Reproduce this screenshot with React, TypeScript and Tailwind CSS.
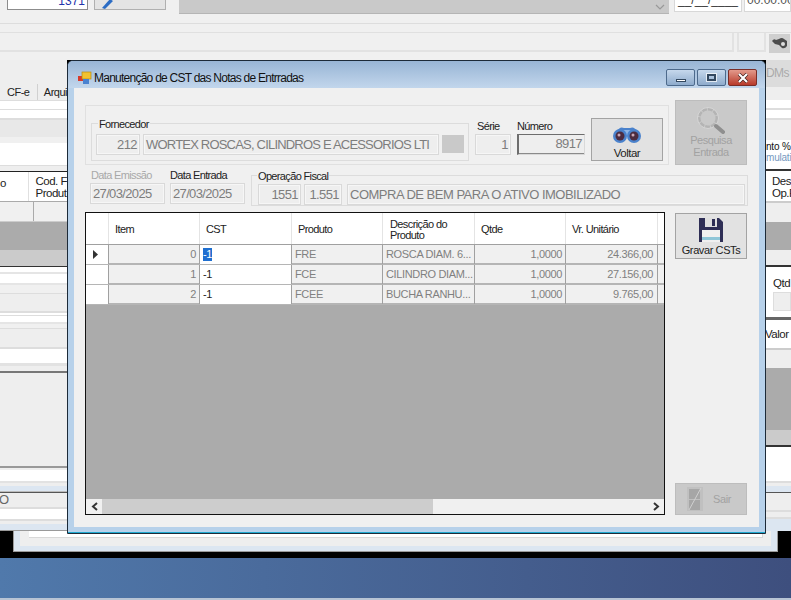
import React from "react";

type Stripe = [number, string, React.ReactNode?];

const leftStripes: Stripe[] = [
  [24, "bg-[#eeeeee]"],
  [16, "bg-[#eeeeee]", (
    <div className="flex h-full text-[11px] tracking-[-0.5px] leading-[16px] text-[#222] whitespace-nowrap">
      <div className="w-[39px] pl-[7px] border-r border-[#d0d0d0]">CF-e</div>
      <div className="pl-[6px]">Arqui</div>
    </div>
  )],
  [1, "bg-[#dddddd]"],
  [8, "bg-white"],
  [1, "bg-[#dddddd]"],
  [8, "bg-white"],
  [2, "bg-[#dddddd]"],
  [17, "bg-[#e8e8e8]"],
  [6, "bg-[#f0f0f0]"],
  [22, "bg-white"],
  [1, "bg-[#dddddd]"],
  [5, "bg-[#eeeeee]"],
  [1, "bg-[#222222]"],
  [29, "bg-white", (
    <div className="flex h-full text-[11.5px] tracking-[-0.5px] text-[#222] whitespace-nowrap">
      <div className="w-[33px] pt-[3px] border-r border-[#e0e0e0]">o</div>
      <div className="pl-[6px] pt-[3px]">
        <div className="leading-[12px]">Cod. F</div>
        <div className="leading-[12px]">Produt</div>
      </div>
    </div>
  )],
  [1, "bg-[#aaaaaa]"],
  [19, "bg-[#f0f0f0]", <div className="w-[34px] h-full border-r border-[#aaaaaa]" />],
  [1, "bg-[#cccccc]"],
  [28, "bg-[#ababab]"],
  [16, "bg-[#cbcbcb]"],
  [1, "bg-[#333333]"],
  [5, "bg-white"],
  [2, "bg-[#e5e5e5]"],
  [9, "bg-white"],
  [2, "bg-[#e5e5e5]"],
  [8, "bg-[#f0f0f0]"],
  [1, "bg-[#dddddd]"],
  [17, "bg-[#eeeeee]"],
  [2, "bg-[#dddddd]"],
  [2, "bg-white"],
  [1, "bg-[#dddddd]"],
  [6, "bg-white"],
  [2, "bg-[#e5e5e5]"],
  [4, "bg-[#f0f0f0]"],
  [1, "bg-[#dddddd]"],
  [18, "bg-[#eeeeee]"],
  [2, "bg-[#dddddd]"],
  [14, "bg-white"],
  [3, "bg-[#e2e2e2]"],
  [5, "bg-[#eeeeee]"],
  [2, "bg-[#777777]"],
  [93, "bg-[#eeeeee]"],
  [2, "bg-[#999999]"],
  [2, "bg-[#eeeeee]"],
  [11, "bg-white"],
  [2, "bg-[#e2e2e2]"],
  [3, "bg-[#eeeeee]"],
  [5, "bg-[#dce6f1]"],
  [1, "bg-[#bbbbbb]"],
  [1, "bg-[#555555]"],
  [14, "bg-[#eeeeee]", <div className="text-[13px] leading-[14px] text-[#666] -ml-[1px]">O</div>],
  [2, "bg-[#dddddd]"],
  [10, "bg-white"],
  [2, "bg-[#dddddd]"],
  [3, "bg-[#eeeeee]"],
  [6, "bg-[#dce6f1]"],
  [1, "bg-[#999999]"],
];

const rightStripes: Stripe[] = [
  [27, "bg-[#dcdcdc]", <div className="text-[12px] tracking-[-0.6px] leading-[26px] text-[#aaa] whitespace-nowrap">DMs</div>],
  [13, "bg-[#eeeeee]"],
  [8, "bg-white"],
  [2, "bg-[#dddddd]"],
  [8, "bg-white"],
  [2, "bg-[#dddddd]"],
  [20, "bg-[#eeeeee]"],
  [29, "bg-white", (
    <div className="pt-[1px] text-[10px] tracking-[-0.2px] whitespace-nowrap">
      <div className="leading-[11px] text-[#111]">nto %</div>
      <div className="leading-[11px] text-[#3a6ea5] opacity-70">mulati</div>
    </div>
  )],
  [2, "bg-[#333333]"],
  [30, "bg-white", (
    <div className="pl-[6px] pt-[4px] text-[11.5px] tracking-[-0.5px] text-[#222] whitespace-nowrap">
      <div className="leading-[12px]">Desc</div>
      <div className="leading-[12px]">Op.F</div>
    </div>
  )],
  [2, "bg-[#cccccc]"],
  [19, "bg-[#eeeeee]"],
  [28, "bg-[#ababab]"],
  [15, "bg-[#eeeeee]"],
  [2, "bg-[#333333]"],
  [50, "bg-white", (
    <div className="pl-[7px] pt-[9px] text-[11.5px] tracking-[-0.5px] leading-[14px] text-[#222]">
      Qtd
      <div className="mt-[2px] h-[19px] bg-[#eeeeee] border border-[#dddddd]" />
    </div>
  )],
  [3, "bg-[#666666]"],
  [28, "bg-white", <div className="text-[11.5px] tracking-[-0.5px] leading-[28px] -ml-[1px] text-[#222]">Valor</div>],
  [2, "bg-[#cccccc]"],
  [18, "bg-[#eeeeee]"],
  [62, "bg-[#ababab]"],
  [15, "bg-[#cbcbcb]"],
  [2, "bg-[#333333]"],
  [34, "bg-white"],
  [2, "bg-[#dddddd]"],
  [3, "bg-[#eeeeee]"],
  [6, "bg-[#dce6f1]"],
  [1, "bg-[#555555]"],
  [17, "bg-[#eeeeee]"],
  [2, "bg-[#dddddd]"],
  [5, "bg-[#eeeeee]"],
  [2, "bg-[#dddddd]"],
  [12, "bg-[#dce6f1]"],
];

const Stripes = ({ items, className }: { items: Stripe[]; className: string }) => (
  <div className={`${className} overflow-hidden`}>
    {items.map(([h, c, content], i) => (
      <div key={i} className={`${c} overflow-hidden`} style={{ height: h }}>
        {content}
      </div>
    ))}
  </div>
);

const Field = ({
  className,
  children,
  right,
}: {
  className: string;
  children?: React.ReactNode;
  right?: boolean;
}) => (
  <div
    className={`${className} h-[21px] shrink-0 bg-[#eeeeee] border border-[#d9d9d9] shadow-[inset_0_0_0_1px_#f6f6f6] text-[#7d7d7d] text-[13px] leading-[19px] px-[2px] overflow-hidden whitespace-nowrap ${
      right ? "text-right" : ""
    }`}
  >
    {children}
  </div>
);

const Label = ({ children, disabled }: { children: React.ReactNode; disabled?: boolean }) => (
  <div className={`text-[11px] tracking-[-0.65px] leading-[14px] whitespace-nowrap ${disabled ? "text-[#a8a8a8]" : "text-[#222]"}`}>
    {children}
  </div>
);

const Legend = ({ children, className }: { children: React.ReactNode; className: string }) => (
  <div className={`absolute -top-[7px] ${className} bg-[#f0f0f0] text-[11px] tracking-[-0.65px] leading-[14px] text-[#222] whitespace-nowrap`}>
    {children}
  </div>
);

const Binoculars = () => (
  <svg width="30" height="20" viewBox="0 0 30 20">
    <path d="M5 6 Q8 1 12 3 L18 3 Q22 1 25 6 L19 9 L11 9 Z" fill="#4a82cc" />
    <rect x="11" y="5" width="8" height="6" fill="#8fb6e6" />
    <circle cx="8" cy="11" r="7" fill="#4a82cc" />
    <circle cx="22" cy="11" r="7" fill="#4a82cc" />
    <circle cx="8" cy="11" r="4.5" fill="#4c2c40" />
    <circle cx="22" cy="11" r="4.5" fill="#4c2c40" />
    <circle cx="7" cy="10" r="1.5" fill="#c9a8b8" />
    <circle cx="21" cy="10" r="1.5" fill="#c9a8b8" />
  </svg>
);

const Magnifier = () => (
  <svg width="28" height="27" viewBox="0 0 28 27">
    <circle cx="11" cy="11" r="9" fill="none" stroke="#b4b4b4" strokeWidth="3" strokeDasharray="5 1" />
    <circle cx="11" cy="11" r="10.5" fill="none" stroke="#d6d6d6" strokeWidth="1" />
    <path d="M19 19 L26 25" stroke="#8f8f8f" strokeWidth="4" strokeLinecap="round" />
  </svg>
);

const Floppy = () => (
  <svg width="24" height="24" viewBox="0 0 24 24">
    <path d="M0 0 H20 L24 4 V24 H0 Z" fill="#2e2e55" />
    <rect x="6" y="0" width="12" height="9" fill="#dfdfdf" />
    <rect x="13" y="1" width="3" height="7" fill="#2e2e55" />
    <rect x="3" y="12" width="18" height="12" fill="#f0f0f0" />
    <rect x="3" y="19" width="18" height="3" fill="#8fc6d8" />
  </svg>
);

const Door = () => (
  <svg width="16" height="24" viewBox="0 0 16 24">
    <rect x="0" y="0" width="16" height="24" fill="#c0c0c0" />
    <rect x="2" y="2" width="11" height="10" fill="#a6a6a6" />
    <rect x="2" y="13" width="11" height="10" fill="#a6a6a6" />
    <path d="M2 23 L14 1" stroke="#d0d0d0" strokeWidth="1" />
  </svg>
);

const AppIcon = () => (
  <svg width="14" height="14" viewBox="0 0 14 14" className="shrink-0">
    <rect x="0" y="5" width="5" height="5" fill="#d83a2a" />
    <rect x="4" y="1" width="9" height="7" fill="#f2c230" stroke="#b88a10" strokeWidth="0.7" />
    <rect x="5" y="8" width="6" height="5" fill="#4a82d0" />
  </svg>
);

const rows = [
  ["0", "-1", "FRE", "ROSCA DIAM. 6...", "1,0000", "24.366,00"],
  ["1", "-1", "FCE", "CILINDRO DIAM...", "1,0000", "27.156,00"],
  ["2", "-1", "FCEE", "BUCHA RANHU...", "1,0000", "9.765,00"],
];

const COLS = "grid grid-cols-[23px_91px_92px_91px_92px_91px_92px_6px]";

export default function App() {
  return (
    <div
      className="relative w-[791px] h-[600px] overflow-hidden bg-black flex flex-col"
      style={{ fontFamily: '"Liberation Sans", Arial, sans-serif' }}
    >
      {/* Top of the application behind the dialog */}
      <div className="h-[60px] shrink-0 bg-[#f0f0f0] overflow-hidden">
        <div className="h-[15px] flex items-start overflow-hidden">
          <div className="ml-[7px] mt-[-10px] w-[81px] h-[20px] bg-white border border-[#8c8c8c] text-right pr-[2px] text-[12px] leading-[20px] text-[#2233aa]">
            1371
          </div>
          <div className="ml-[6px] mt-[-10px] w-[72px] h-[20px] bg-[#e4e4e4] border border-[#b0b0b0] pl-[6px]">
            <svg width="12" height="18" viewBox="0 0 12 18">
              <path d="M1 17 L9 8 L12 10 L4 18 Z" fill="#2b6cc4" />
            </svg>
          </div>
          <div className="ml-[13px] w-[490px] h-[14px] bg-[#c9c9c9] border-b border-[#b5b5b5] flex justify-end items-center pr-[4px]">
            <svg width="10" height="6" viewBox="0 0 10 6">
              <path d="M1 1 L5 5 L9 1" fill="none" stroke="#999" strokeWidth="1.2" />
            </svg>
          </div>
          <div className="ml-[5px] mt-[-8px] w-[68px] h-[20px] bg-white border border-[#d8d8d8] text-[12px] leading-[14px] text-[#333] text-center overflow-hidden">
            __/__/____
          </div>
          <div className="ml-[2px] mt-[-8px] flex-1 h-[20px] bg-white border border-[#d8d8d8] text-[12px] leading-[14px] text-[#555] pl-[2px] overflow-hidden whitespace-nowrap">
            00:00:00
          </div>
        </div>
        <div className="h-[9px] border-b border-[#dddddd]" />
        <div className="h-[9px] border-b border-[#e0e0e0]" />
        <div className="h-[19px] flex">
          <div className="w-[734px] bg-[#f0f0f0] border-r-2 border-b-2 border-[#e2e2e2]" />
          <div className="ml-[3px] w-[29px] border-2 border-t-0 border-[#e2e2e2]" />
          <div className="ml-[3px] mt-[1px] w-[21px] h-[19px] bg-[#cfcfcf] flex items-center justify-center">
            <svg width="17" height="13" viewBox="0 0 17 13">
              <path d="M1 4 Q3 1 5 3 L8 2 Q11 0 13 2 L16 4 V9 Q14 12 11 11 L8 8 L4 7 Z" fill="#4b4b4b" />
              <circle cx="12" cy="7" r="2" fill="#dddddd" />
            </svg>
          </div>
        </div>
      </div>

      {/* Middle of the application: only the strips beside the dialog are seen */}
      <div className="h-[471px] shrink-0 flex justify-between">
        <Stripes items={leftStripes} className="w-[67px]" />
        <Stripes items={rightStripes} className="w-[25px]" />
      </div>

      {/* Bottom of the second window */}
      <div className="h-[21px] shrink-0 flex px-[13px]">
        <div className="flex-1 border-l border-b border-r border-[#9a9a9a] bg-[#dce6f1] pl-[6px] pr-[6px] pb-[5px]">
          <div className="h-full bg-[#eeeeee] pl-[9px] pr-[8px] pb-[8px]">
            <div className="h-full bg-white border-r border-b border-[#d8d8d8]" />
          </div>
        </div>
      </div>

      {/* Desktop */}
      <div className="mt-[6px] h-[40px] shrink-0 bg-[linear-gradient(90deg,#5079ab,#3e4f7e)]" />
      <div className="flex-1 bg-[#b8c4d4]" />

      {/* Dialog */}
      <div className="absolute left-[67px] top-[60px] w-[699px] h-[474px] rounded-t-[6px] border border-[#1c2a38] bg-[#b7d1ea] flex flex-col">
        <div className="h-[27px] shrink-0 rounded-t-[5px] bg-[linear-gradient(180deg,#98b5d5,#c2d6ec)] flex justify-between pl-[10px] pr-[8px]">
          <div className="flex items-center gap-[2px] pt-[7px]">
            <AppIcon />
            <span className="text-[12px] tracking-[-0.75px] text-[#111] whitespace-nowrap">Manutenção de CST das Notas de Entrradas</span>
          </div>
          <div className="flex gap-[2px] pt-[8px]">
            <div className="w-[29px] h-[17px] rounded-[2px] border border-[#4d6a8c] bg-[linear-gradient(180deg,#c6d8ec,#8eabcc)] flex items-end justify-center pb-[3px]">
              <div className="w-[10px] h-[3px] bg-white border border-[#33485f]" />
            </div>
            <div className="w-[29px] h-[17px] rounded-[2px] border border-[#4d6a8c] bg-[linear-gradient(180deg,#c6d8ec,#8eabcc)] flex items-center justify-center">
              <div className="w-[9px] h-[7px] border-2 border-[#33485f] outline outline-1 outline-white/70" />
            </div>
            <div className="w-[29px] h-[17px] rounded-[2px] border border-[#7a2e28] bg-[linear-gradient(180deg,#e39a8c,#b83a2a)] flex items-center justify-center">
              <svg width="12" height="10" viewBox="0 0 12 10">
                <path d="M2 1 L10 9 M10 1 L2 9" stroke="#3a1a18" strokeWidth="3.4" />
                <path d="M2 1 L10 9 M10 1 L2 9" stroke="#fff" strokeWidth="2.2" />
              </svg>
            </div>
          </div>
        </div>

        <div className="ml-[6px] w-[685px] h-[439px] shrink-0 bg-[#f0f0f0] pl-[11px] pt-[12px]">
          {/* First row */}
          <div className="flex items-end">
            <div className="w-[584px] h-[60px] border border-[#e0e0e0] pl-[5px] pb-[3px] flex items-end">
              <div className="relative w-[378px] h-[38px] border border-[#dcdcdc] pl-[4px] pt-[10px] flex gap-[3px]">
                <Legend className="left-[6px] px-[1px]">Fornecedor</Legend>
                <Field className="w-[44px] tracking-[-0.6px]" right>212</Field>
                <Field className="w-[296px] tracking-[-0.8px]">WORTEX ROSCAS, CILINDROS E ACESSORIOS LTI</Field>
                <div className="w-[22px] h-[18px] mt-[1px] bg-[#c9c9c9]" />
              </div>
              <div className="ml-[6px] w-[36px] mb-[6px]">
                <div className="pl-[2px] mb-[1px]"><Label>Série</Label></div>
                <Field className="w-[36px] tracking-[-0.6px]" right>1</Field>
              </div>
              <div className="ml-[6px] w-[68px] mb-[6px]">
                <div className="mb-[1px]"><Label>Número</Label></div>
                <div className="h-[21px] bg-[#eeeeee] border border-[#d9d9d9] border-l-[#6d6d6d] border-t-[#6d6d6d] border-l-2 shadow-[inset_0_-1px_0_#8a8a8a] text-[#7d7d7d] text-[13px] tracking-[-0.6px] leading-[18px] text-right pr-[2px]">
                  8917
                </div>
              </div>
              <div className="ml-[6px] w-[72px] h-[43px] bg-[#e2e2e2] border border-[#a3a3a3] flex flex-col items-center pt-[6px]">
                <Binoculars />
                <div className="text-[11.5px] tracking-[-0.5px] leading-[13px] text-[#222] mt-[2px]">Voltar</div>
              </div>
            </div>
            <div className="ml-[6px] w-[72px] h-[65px] bg-[#c9c9c9] border border-[#bdbdbd] flex flex-col items-center pt-[6px]">
              <Magnifier />
              <div className="text-[11px] tracking-[-0.45px] leading-[12px] text-[#a2a2a2] text-center">
                Pesquisa<br />Entrada
              </div>
            </div>
          </div>

          {/* Second row */}
          <div className="mt-[5px] h-[36px] pl-[5px] flex items-end">
            <div className="w-[75px] mb-[2px]">
              <div className="pl-[1px] mb-[1px]"><Label disabled>Data Emissão</Label></div>
              <Field className="w-[75px] tracking-[-0.65px]">27/03/2025</Field>
            </div>
            <div className="ml-[5px] w-[75px] mb-[2px]">
              <div className="mb-[1px]"><Label>Data Entrada</Label></div>
              <Field className="w-[75px] tracking-[-0.65px]">27/03/2025</Field>
            </div>
            <div className="relative ml-[6px] w-[497px] h-[31px] border border-[#dcdcdc] pl-[6px] pt-[8px] flex">
              <Legend className="left-[5px] px-[1px]">Operação Fiscal</Legend>
              <Field className="w-[43px] tracking-[-0.6px]" right>1551</Field>
              <Field className="w-[38px] ml-[3px] tracking-[-0.6px]" right>1.551</Field>
              <Field className="w-[398px] ml-[5px] tracking-[-0.5px]">COMPRA DE BEM PARA O ATIVO IMOBILIZADO</Field>
            </div>
          </div>

          {/* Grid and side buttons */}
          <div className="mt-[6px] flex">
            <div className="w-[580px] h-[303px] border border-[#111] bg-[#ababab] flex flex-col">
              <div className={`${COLS} h-[32px] pb-0 bg-white border-b border-[#a0a0a0] text-[11px] tracking-[-0.6px] text-[#222]`}>
                <div className="border-r border-[#e4e4e4]" />
                {["Item", "CST", "Produto", "", "Qtde", "Vr. Unitário"].map((t, i) =>
                  t ? (
                    <div key={t} className="border-r border-[#e4e4e4] pl-[6px] pt-[2px] flex items-center">{t}</div>
                  ) : (
                    <div key={i} className="border-r border-[#e4e4e4] pl-[7px] pt-[2px] flex flex-col justify-center">
                      <div className="leading-[11px]">Descrição do</div>
                      <div className="leading-[11px]">Produto</div>
                    </div>
                  )
                )}
                <div />
              </div>
              {rows.map((r, i) => (
                <div key={r[0]} className={`${COLS} h-[20px] bg-[#f0f0f0] border-b-2 border-[#b5b5b5] text-[11px] tracking-[-0.35px] leading-[19px] text-[#808080]`}>
                  <div className="bg-white border-r border-[#a0a0a0] flex items-center pl-[7px]">
                    {i === 0 && (
                      <svg width="5" height="9" viewBox="0 0 5 9">
                        <path d="M0 0 L5 4.5 L0 9 Z" fill="#333" />
                      </svg>
                    )}
                  </div>
                  <div className="border-r border-[#a0a0a0] text-right pr-[3px]">{r[0]}</div>
                  <div className="bg-white border-r border-[#a0a0a0] pl-[3px] text-[#222]">
                    {i === 0 ? <span className="bg-[#1f6fd0] text-white inline-block leading-[13px]">{r[1]}</span> : r[1]}
                  </div>
                  <div className="border-r border-[#a0a0a0] pl-[3px]">{r[2]}</div>
                  <div className="border-r border-[#a0a0a0] pl-[3px] whitespace-nowrap overflow-hidden">{r[3]}</div>
                  <div className="border-r border-[#a0a0a0] text-right pr-[3px]">{r[4]}</div>
                  <div className="border-r border-[#a0a0a0] text-right pr-[4px]">{r[5]}</div>
                  <div />
                </div>
              ))}
              <div className="flex-1" />
              <div className="h-[15px] bg-[#f0f0f0] flex items-center">
                <div className="w-[16px] flex justify-center">
                  <svg width="7" height="9" viewBox="0 0 7 9">
                    <path d="M6 1 L2 4.5 L6 8" fill="none" stroke="#333" strokeWidth="2" />
                  </svg>
                </div>
                <div className="w-[331px] h-full bg-[#cdcdcd]" />
                <div className="flex-1" />
                <div className="w-[16px] flex justify-center">
                  <svg width="7" height="9" viewBox="0 0 7 9">
                    <path d="M1 1 L5 4.5 L1 8" fill="none" stroke="#333" strokeWidth="2" />
                  </svg>
                </div>
              </div>
            </div>
            <div className="ml-[10px] w-[72px] h-[303px] flex flex-col justify-between pt-[1px]">
              <div className="h-[46px] bg-[#e2e2e2] border border-[#a3a3a3] flex flex-col items-center pt-[4px]">
                <Floppy />
                <div className="text-[11px] tracking-[-0.4px] leading-[13px] mt-[2px] text-[#222] whitespace-nowrap">Gravar CSTs</div>
              </div>
              <div className="h-[32px] bg-[#c9c9c9] border border-[#bdbdbd] flex items-center pl-[11px]">
                <Door />
                <span className="ml-[10px] text-[11px] tracking-[-0.4px] text-[#a2a2a2]">Sair</span>
              </div>
            </div>
          </div>
        </div>
        <div className="mt-auto h-[1px] bg-[#1ea8d0]" />
      </div>
    </div>
  );
}
